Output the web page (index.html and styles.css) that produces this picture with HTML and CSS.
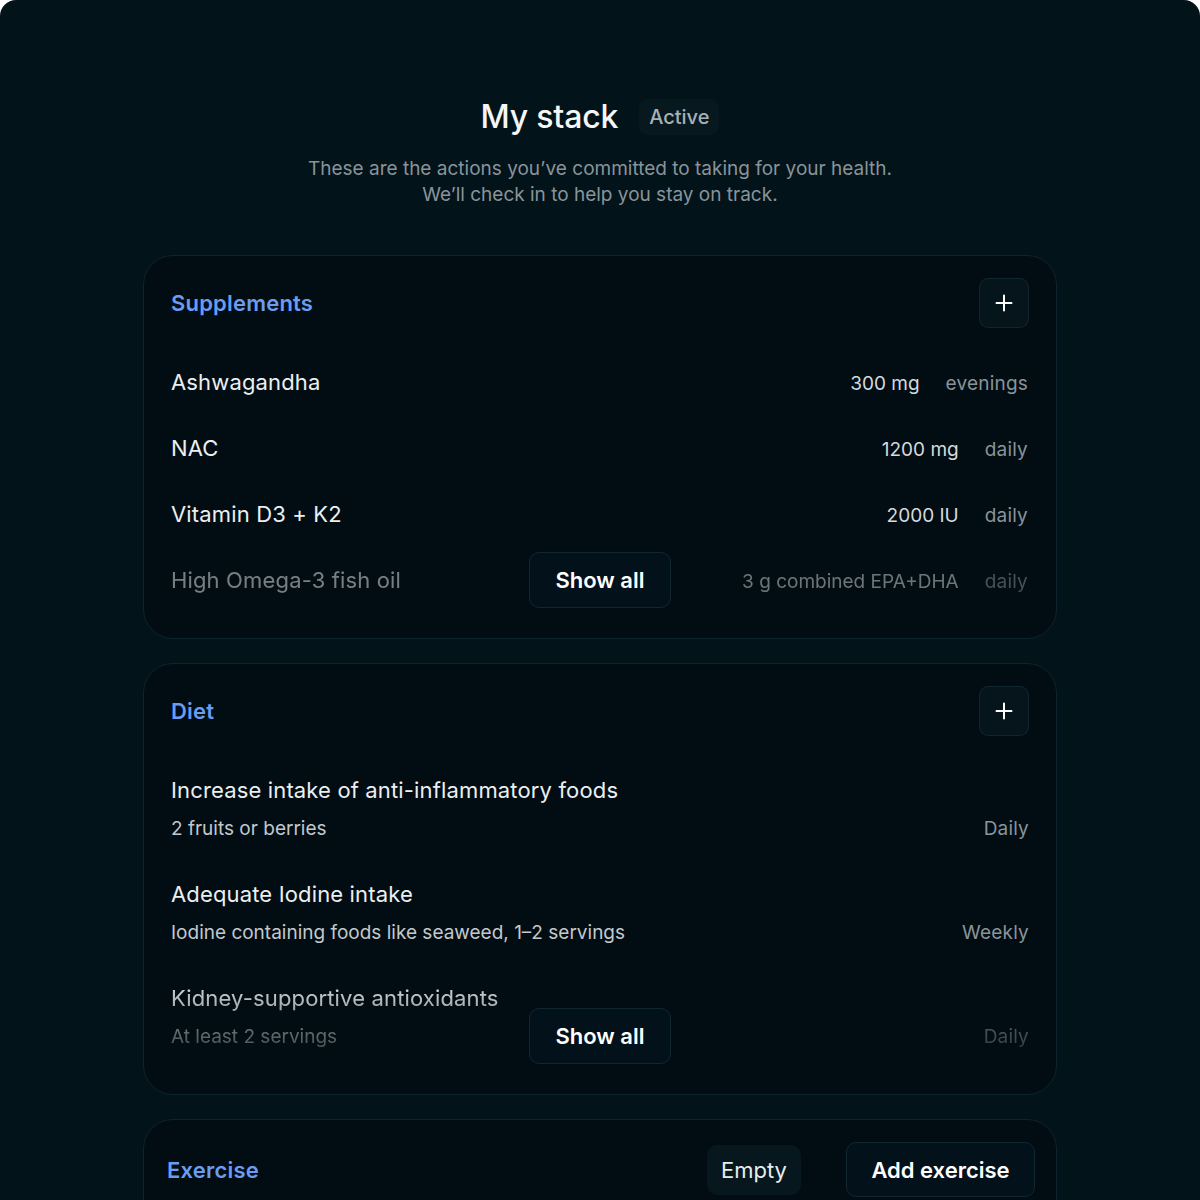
FILE: index.html
```html
<!DOCTYPE html>
<html lang="en">
<head>
<meta charset="utf-8">
<title>My stack</title>
<link rel="stylesheet" href="styles.css">
</head>
<body>
<div class="app">
  <header class="intro">
    <div class="heading-row">
      <h1 class="title">My stack</h1>
      <span class="status">Active</span>
    </div>
    <p class="lead">These are the actions you’ve committed to taking for your health.<br>We’ll check in to help you stay on track.</p>
  </header>

  <section class="card">
    <div class="card-head">
      <h2 class="card-title">Supplements</h2>
      <button class="icon-btn" aria-label="Add supplement">
        <svg width="18" height="18" viewBox="0 0 18 18"><path d="M9 1.5v15M1.5 9h15" stroke="#ffffff" stroke-width="2" stroke-linecap="round" fill="none"/></svg>
      </button>
    </div>
    <ul class="list">
      <li class="supp">
        <span class="name">Ashwagandha</span>
        <span class="meta"><span class="dose">300 mg</span><span class="freq">evenings</span></span>
      </li>
      <li class="supp">
        <span class="name">NAC</span>
        <span class="meta"><span class="dose">1200 mg</span><span class="freq">daily</span></span>
      </li>
      <li class="supp">
        <span class="name">Vitamin D3 + K2</span>
        <span class="meta"><span class="dose">2000 IU</span><span class="freq">daily</span></span>
      </li>
      <li class="supp faded-single">
        <span class="name">High Omega-3 fish oil</span>
        <span class="meta"><span class="dose">3 g combined EPA+DHA</span><span class="freq">daily</span></span>
      </li>
    </ul>
    <button class="show-all">Show all</button>
  </section>

  <section class="card">
    <div class="card-head">
      <h2 class="card-title">Diet</h2>
      <button class="icon-btn" aria-label="Add diet item">
        <svg width="18" height="18" viewBox="0 0 18 18"><path d="M9 1.5v15M1.5 9h15" stroke="#ffffff" stroke-width="2" stroke-linecap="round" fill="none"/></svg>
      </button>
    </div>
    <ul class="list list-diet">
      <li class="diet">
        <div class="diet-main">
          <span class="name">Increase intake of anti-inflammatory foods</span>
          <span class="sub">2 fruits or berries</span>
        </div>
        <span class="freq">Daily</span>
      </li>
      <li class="diet">
        <div class="diet-main">
          <span class="name">Adequate Iodine intake</span>
          <span class="sub">Iodine containing foods like seaweed, 1–2 servings</span>
        </div>
        <span class="freq">Weekly</span>
      </li>
      <li class="diet faded-double">
        <div class="diet-main">
          <span class="name">Kidney-supportive antioxidants</span>
          <span class="sub">At least 2 servings</span>
        </div>
        <span class="freq">Daily</span>
      </li>
    </ul>
    <button class="show-all">Show all</button>
  </section>

  <section class="card card-compact">
    <div class="card-head card-head-tall">
      <h2 class="card-title">Exercise</h2>
      <div class="head-actions">
        <span class="empty">Empty</span>
        <button class="text-btn">Add exercise</button>
      </div>
    </div>
  </section>
</div>
</body>
</html>
```

FILE: styles.css
```css
* { box-sizing: border-box; }

html, body {
  margin: 0;
  padding: 0;
  background: #ffffff;
}

body {
  font-family: Inter, "Noto Sans", "Liberation Sans", sans-serif;
  overflow: hidden;
  height: 1200px;
}

.app {
  background: #03131a;
  border-radius: 16px;
  min-height: 1320px;
  padding-top: 98px;
  display: flex;
  flex-direction: column;
  align-items: center;
}

.intro {
  display: flex;
  flex-direction: column;
  align-items: center;
}

.heading-row {
  display: flex;
  align-items: center;
  gap: 21px;
  height: 38px;
}

.title {
  margin: 0;
  font-size: 32px;
  line-height: 38px;
  font-weight: 500;
  color: #f4f6f7;
  letter-spacing: -0.2px;
}

.status {
  height: 36px;
  padding: 0 10px;
  display: flex;
  align-items: center;
  border-radius: 9px;
  background: #08181f;
  color: #a7b1b6;
  font-size: 20px;
  font-weight: 500;
}

.lead {
  margin: 20px 0 0;
  text-align: center;
  font-size: 19px;
  line-height: 26px;
  color: #89949a;
}

.card {
  position: relative;
  width: 914px;
  margin-top: 24px;
  padding: 22px 27px 44px 27px;
  background: #010d12;
  border: 1px solid #0e232d;
  border-radius: 30px;
}

.intro + .card { margin-top: 47px; }

.card-compact {
  padding: 22px 21px 40px 23px;
}

.card-head {
  display: flex;
  align-items: center;
  justify-content: space-between;
  height: 50px;
}

.card-head-tall {
  height: 55px;
}

.card-title {
  margin: 0;
  font-size: 22px;
  font-weight: 600;
  color: #6a9cf2;
  letter-spacing: 0.2px;
}

.icon-btn {
  width: 50px;
  height: 50px;
  margin: 0;
  padding: 0;
  border: 1px solid #10262f;
  border-radius: 9px;
  background: #06151c;
  display: flex;
  align-items: center;
  justify-content: center;
}

.list {
  list-style: none;
  margin: 40px 0 0;
  padding: 0;
  display: flex;
  flex-direction: column;
  gap: 38px;
}

.list-diet {
  gap: 38px;
}

.supp {
  height: 28px;
  display: flex;
  align-items: baseline;
  justify-content: space-between;
  line-height: 28px;
}

.name {
  font-size: 22px;
  line-height: 28px;
  color: #eceff1;
  letter-spacing: 0.15px;
}

.meta {
  display: flex;
  align-items: baseline;
  gap: 26px;
  padding-right: 1px;
}

.dose {
  font-size: 19px;
  line-height: 28px;
  color: #d5dadd;
}

.freq {
  font-size: 19px;
  line-height: 26px;
  color: #89949a;
  letter-spacing: 0.2px;
}

.diet {
  display: flex;
  align-items: flex-end;
  justify-content: space-between;
}

.diet-main {
  display: flex;
  flex-direction: column;
  gap: 12px;
}

.sub {
  font-size: 19px;
  line-height: 26px;
  color: #c3c9cc;
}

.faded-single { opacity: 0.5; }

.faded-double {
  -webkit-mask-image: linear-gradient(to bottom, rgba(0,0,0,0.9), rgba(0,0,0,0.35));
  mask-image: linear-gradient(to bottom, rgba(0,0,0,0.9), rgba(0,0,0,0.35));
}

.show-all {
  position: absolute;
  left: 50%;
  bottom: 30px;
  transform: translateX(-50%);
  width: 142px;
  height: 56px;
  margin: 0;
  border: 1px solid #11272f;
  border-radius: 10px;
  background: #03111a;
  color: #ffffff;
  font-family: inherit;
  font-size: 22px;
  font-weight: 600;
}

.head-actions {
  display: flex;
  align-items: center;
  gap: 45px;
}

.empty {
  height: 50px;
  width: 94px;
  display: flex;
  align-items: center;
  justify-content: center;
  border-radius: 10px;
  background: #07171e;
  color: #e9edef;
  font-size: 22px;
}

.text-btn {
  height: 55px;
  width: 189px;
  margin: 0;
  border: 1px solid #11272f;
  border-radius: 10px;
  background: #03111a;
  color: #ffffff;
  font-family: inherit;
  font-size: 22px;
  font-weight: 600;
}
```
